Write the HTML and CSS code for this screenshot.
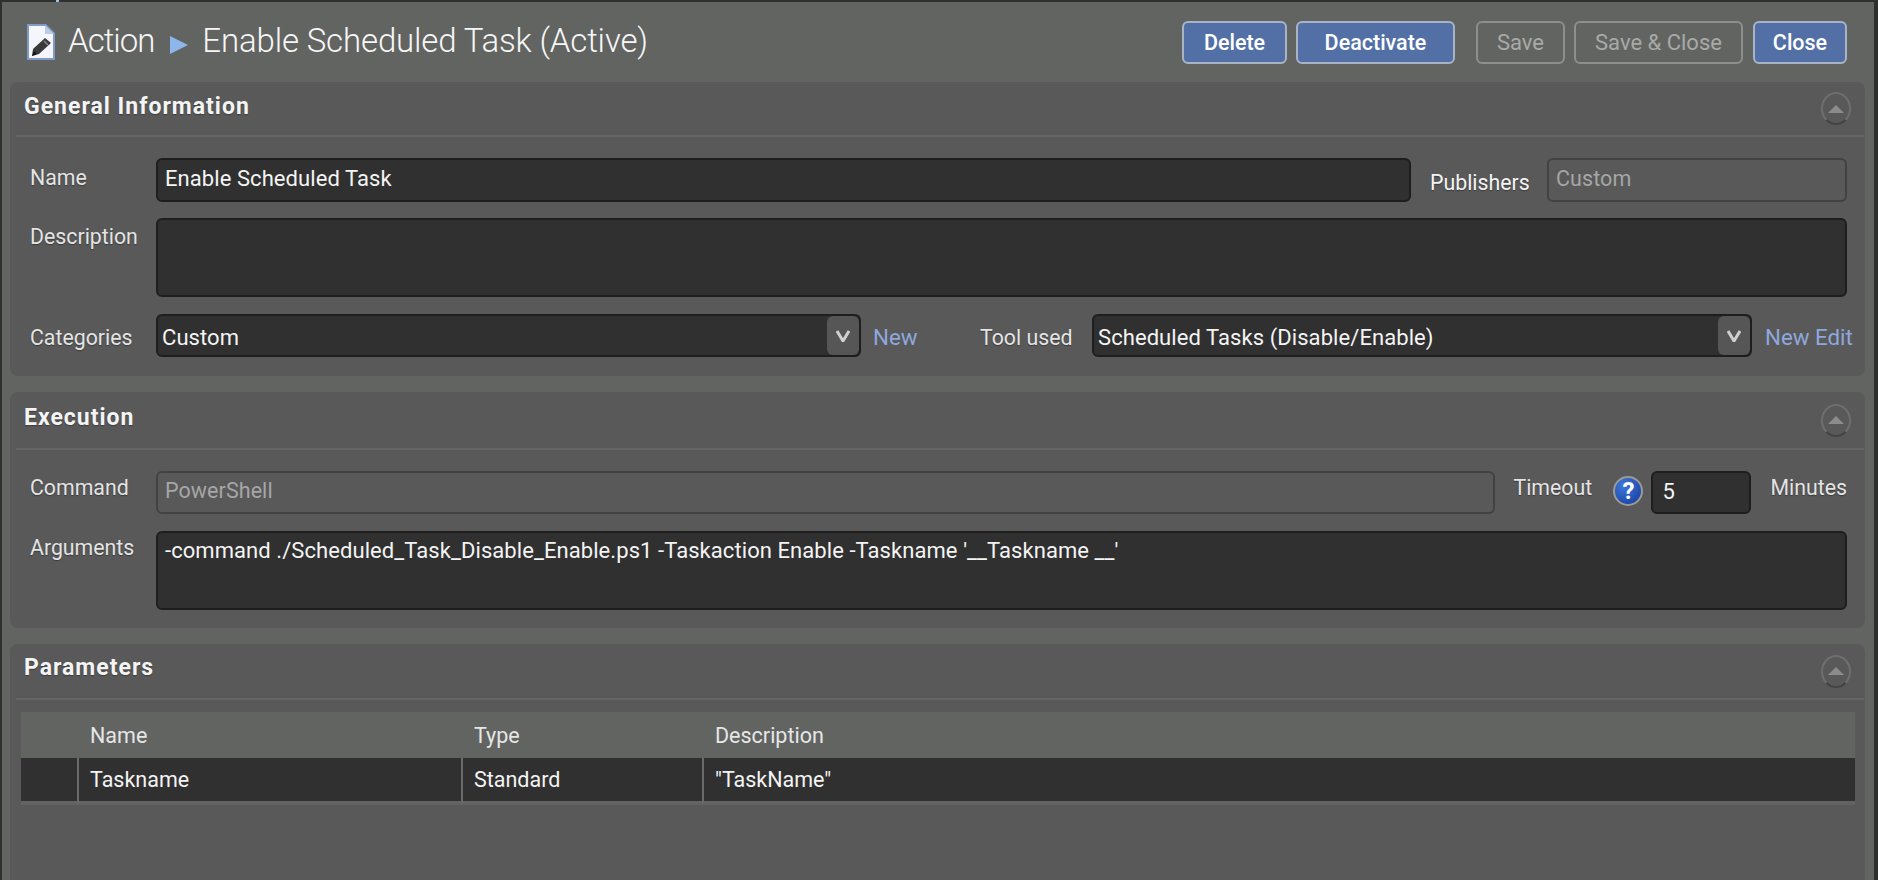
FILE: index.html
```html
<!DOCTYPE html>
<html>
<head>
    <title>Action - Enable Scheduled Task</title>
    <link rel="stylesheet" href="styles.css">
</head>
<body>
    <span class="top-dot"></span>
    <div class="window">
        <div class="titlebar">
            <svg class="doc-icon" width="30" height="38" viewBox="0 0 30 38">
                <path d="M1 1H20L29 10V37H1Z" fill="#7f9ac4"/>
                <path d="M3 3H19L27 11V35H3Z" fill="#f4f6fb"/>
                <path d="M19 2L28 11H19Z" fill="#b9cbe6"/>
                <path d="M7 26L19 15L25 20L13 31L6 33Z" fill="#3a3a3a"/>
                <path d="M18 18L22 22" stroke="#8a8a8a" stroke-width="1.5"/>
                <path d="M6 33L8 28L11 31Z" fill="#111"/>
            </svg>
            <span class="crumb crumb-root">Action</span>
            <svg class="crumb-arrow" width="18" height="18" viewBox="0 0 18 18">
                <path d="M0 0L18 9L0 18Z" fill="#8db7ea"/>
            </svg>
            <span class="crumb">Enable Scheduled Task (Active)</span>
            <div class="actions">
                <button class="btn btn-delete">Delete</button>
                <button class="btn btn-deactivate">Deactivate</button>
                <button class="btn btn-save" disabled>Save</button>
                <button class="btn btn-saveclose" disabled>Save &amp; Close</button>
                <button class="btn btn-close">Close</button>
            </div>
        </div>

        <section class="panel">
            <div class="panel-head head-general">
                <h3>General Information</h3>
                <span class="collapse"><i></i></span>
            </div>
            <div class="panel-body body-general">
                <div class="row row-first">
                    <label class="lbl-name">Name</label>
                    <div class="field grow">Enable Scheduled Task</div>
                    <label class="lbl-publishers">Publishers</label>
                    <div class="field disabled publishers">Custom</div>
                </div>
                <div class="row row-tall">
                    <label class="lbl-desc">Description</label>
                    <div class="field grow area"></div>
                </div>
                <div class="row row-last">
                    <label>Categories</label>
                    <div class="field select cat-select">Custom<span class="drop"><svg width="14" height="12" viewBox="0 0 14 12"><path d="M1 1L7 11L13 1" fill="none" stroke="#d0d0d0" stroke-width="3"/></svg></span></div>
                    <div class="links cat-links"><a>New</a></div>
                    <label class="lbl-tool">Tool used</label>
                    <div class="field select tool-select">Scheduled Tasks (Disable/Enable)<span class="drop"><svg width="14" height="12" viewBox="0 0 14 12"><path d="M1 1L7 11L13 1" fill="none" stroke="#d0d0d0" stroke-width="3"/></svg></span></div>
                    <div class="links tool-links"><a>New</a> <a>Edit</a></div>
                </div>
            </div>
        </section>

        <section class="panel">
            <div class="panel-head head-exec">
                <h3>Execution</h3>
                <span class="collapse"><i></i></span>
            </div>
            <div class="panel-body body-exec">
                <div class="row">
                    <label>Command</label>
                    <div class="field disabled grow">PowerShell</div>
                    <label class="lbl-timeout">Timeout</label>
                    <span class="help">?</span>
                    <div class="field timeout">5</div>
                    <label class="lbl-minutes">Minutes</label>
                </div>
                <div class="row row-tall">
                    <label>Arguments</label>
                    <div class="field grow area">-command ./Scheduled_Task_Disable_Enable.ps1 -Taskaction Enable -Taskname '__Taskname __'</div>
                </div>
            </div>
        </section>

        <section class="panel panel-fill">
            <div class="panel-head head-params">
                <h3>Parameters</h3>
                <span class="collapse"><i></i></span>
            </div>
            <table class="params">
                <tr>
                    <th class="col-mark"></th>
                    <th class="col-name">Name</th>
                    <th class="col-type">Type</th>
                    <th>Description</th>
                </tr>
                <tr>
                    <td></td>
                    <td>Taskname</td>
                    <td>Standard</td>
                    <td>"TaskName"</td>
                </tr>
            </table>
        </section>
    </div>
</body>
</html>
```

FILE: styles.css
```css
html, body { height: 100%; }
body { margin: 0; background-color: #2e302d; font-family: Roboto, "Liberation Sans", sans-serif; font-size: 22px; color: #fff; overflow: hidden; }

.top-dot { position: absolute; left: 56px; top: 0; width: 3px; height: 2px; background-color: #9cc3ee; }

.window { box-sizing: border-box; height: 878px; margin: 2px 4px 0 2px; padding: 0 9px 0 8px; background-color: #626462; display: flex; flex-direction: column; gap: 16px; }

.titlebar { height: 80px; margin-bottom: -16px; display: flex; align-items: center; flex-shrink: 0; }
.doc-icon { margin: 0 0 0 16px; }
.crumb { font-size: 33px; font-weight: 300; color: #f6f6f6; margin-bottom: 3px; }
.crumb-root { margin-left: 12px; letter-spacing: -1px; }
.crumb-arrow { margin: 6px 14px 0 16px; flex-shrink: 0; }
.crumb-arrow + .crumb { letter-spacing: -0.15px; }
.actions { margin-left: auto; margin-right: 18px; display: flex; }

.btn { box-sizing: border-box; height: 43px; padding: 0; border: 2px solid #a9b3c6; border-radius: 6px; background-color: #5270a6; color: #fff; font-family: inherit; font-size: 21.5px; font-weight: 500; }
.btn[disabled] { background-color: transparent; border-color: #8e8e8c; color: #a9a9a7; font-size: 22px; font-weight: 400; }
.btn-delete { width: 105px; margin-right: 9px; }
.btn-deactivate { width: 159px; margin-right: 21px; }
.btn-save { width: 89px; margin-right: 9px; }
.btn-saveclose { width: 169px; margin-right: 10px; }
.btn-close { width: 94px; }

.panel { background-color: #595959; border-radius: 8px; flex-shrink: 0; }
.panel-fill { flex: 1; border-radius: 8px 8px 0 0; }
.panel-head { box-sizing: border-box; display: flex; align-items: center; justify-content: space-between; margin: 0 1px 0 6px; padding: 0 13px 0 8px; border-bottom: 2px solid #656565; }
.panel-head h3 { margin: 0; font-size: 23px; font-weight: 700; letter-spacing: 1px; color: #f4f4f4; text-shadow: 0 1px 1px #3c3c3c; }
.head-general { height: 55px; }
.head-general h3 { margin-bottom: 4px; }
.head-exec { height: 58px; }
.head-exec h3 { margin-bottom: 5px; }
.head-params { height: 56px; }
.head-params h3 { margin-bottom: 7px; }

.collapse { box-sizing: border-box; width: 30px; height: 33px; border: 2px solid #6f6f6f; border-bottom-color: #444; border-radius: 50%; display: flex; align-items: center; justify-content: center; }
.collapse i { width: 0; height: 0; border-left: 8px solid transparent; border-right: 8px solid transparent; border-bottom: 8px solid #8c8c8c; }

.panel-body { padding: 21px 18px 19px 20px; display: flex; flex-direction: column; }
.body-exec { padding-bottom: 18px; }

.row { display: flex; align-items: flex-start; height: 43px; }
.row-first { height: 44px; }
.row-tall { height: 79px; margin-top: 16px; }
.row-last { margin-top: 17px; }
.body-exec .row-tall { margin-top: 17px; }

label { width: 126px; flex-shrink: 0; font-size: 21.3px; line-height: 36px; color: #e4e4e4; text-shadow: 0 1px 1px #3a3a3a; }
.lbl-name { line-height: 40px; }
.lbl-desc { line-height: 38px; }
.body-exec label { line-height: 34px; }

.field { box-sizing: border-box; height: 100%; padding: 0 7px; border: 2px solid #1e1e1e; border-radius: 6px; background-color: #303030; color: #f4f4f4; font-size: 22px; letter-spacing: 0.07px; line-height: 38px; }
.grow { flex: 1; }
.area { line-height: 30px; padding-top: 3px; }
.field.disabled { background-color: #595959; border-color: #424242; color: #a6a6a6; font-size: 21.5px; }
.body-exec .disabled { line-height: 36px; }

.lbl-publishers { width: 117px; margin-left: 19px; padding-top: 7px; color: #f4f4f4; }
.publishers { width: 300px; flex-shrink: 0; }

.select { position: relative; flex-shrink: 0; padding-left: 4px; line-height: 43px; }
.cat-select { width: 705px; }
.tool-select { width: 660px; }
.drop { position: absolute; right: 0; top: 0; bottom: 0; width: 32px; background-color: #565656; border-radius: 6px; display: flex; align-items: center; justify-content: center; }

.links { flex-shrink: 0; color: #8fa8dc; line-height: 47px; font-size: 22.3px; white-space: nowrap; }
.links a { color: inherit; }
.cat-links { width: 107px; padding-left: 12px; }
.tool-links { padding-left: 13px; }
.lbl-tool { width: 112px; }
.row-last label { line-height: 47px; }

.lbl-timeout { width: 100px; margin-left: 18px; }
.help { box-sizing: border-box; width: 30px; height: 30px; margin: 5px 8px 0 0; flex-shrink: 0; border: 2px solid #9a9a9a; border-radius: 50%; background: radial-gradient(circle at 35% 30%, #3f78d8, #12399a); color: #fff; font-size: 24px; font-weight: 700; line-height: 26px; text-align: center; }
.timeout { width: 100px; flex-shrink: 0; padding-left: 9px; }
.lbl-minutes { width: auto; margin-left: 19px; }

.params { width: 1834px; margin: 12px 0 0 11px; border-collapse: separate; border-spacing: 0; table-layout: fixed; }
.params th, .params td { box-sizing: border-box; }
.params th { height: 46px; padding: 0 0 0 13px; background-color: #626462; color: #e6e6e6; font-size: 21.5px; font-weight: 400; text-align: left; }
.params td { height: 47px; padding: 0 0 0 11px; background-color: #303030; color: #f4f4f4; font-size: 21.5px; border-left: 2px solid #6a6a6a; border-bottom: 4px solid #626462; }
.params td:first-child { border-left: 0; }
.col-mark { width: 56px; }
.col-name { width: 384px; }
.col-type { width: 241px; }
```
